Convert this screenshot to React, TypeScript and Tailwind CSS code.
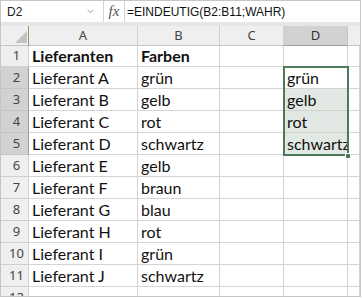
import React from 'react'

const cellFont = { fontFamily: 'Lato, "Noto Sans", sans-serif' }
const headFont = { fontFamily: '"Noto Sans", "Open Sans", sans-serif' }
const barFont = { fontFamily: '"Liberation Sans", Arial, sans-serif' }

const rows: [string, string][] = [
  ['Lieferant A', 'grün'],
  ['Lieferant B', 'gelb'],
  ['Lieferant C', 'rot'],
  ['Lieferant D', 'schwartz'],
  ['Lieferant E', 'gelb'],
  ['Lieferant F', 'braun'],
  ['Lieferant G', 'blau'],
  ['Lieferant H', 'rot'],
  ['Lieferant I', 'grün'],
  ['Lieferant J', 'schwartz'],
]

const unique = ['grün', 'gelb', 'rot', 'schwartz']

function RowHead({ n, sel, h }: { n: string; sel?: boolean; h: string }) {
  return (
    <div
      className={`${h} flex items-center justify-center border-b border-r pl-[4px] text-[13px] text-[#444] ${
        sel ? 'bg-[#d2d2d2] border-r-[#9e9e9e] border-b-[#c4c4c4]' : 'bg-[#efefef] border-[#d0d0d0]'
      }`}
      style={headFont}
    >
      {n}
    </div>
  )
}

function Cell({ text, h, bold, fill }: { text?: string; h: string; bold?: boolean; fill?: boolean }) {
  return (
    <div
      className={`${h} flex items-center overflow-visible whitespace-nowrap border-b border-r pl-[3px] text-[16px] text-[#111] ${
        fill ? 'bg-[#e2e8e3] border-[#cfd4cf]' : 'bg-white border-[#d4d4d4]'
      } ${bold ? 'font-bold' : ''}`}
      style={cellFont}
    >
      {text}
    </div>
  )
}

export default function App() {
  return (
    <div className="h-[298px] w-[362px] bg-white">
      <div className="flex h-[297px] w-[361px] flex-col overflow-hidden border border-[#c6c6c6]">
        {/* formula bar */}
        <div className="flex h-[21px] shrink-0 items-center bg-white" style={barFont}>
          <div className="flex h-full w-[99px] items-center justify-between pl-[6px] pr-[6px]">
            <span className="text-[12px] text-[#222]">D2</span>
            <svg width="7" height="5" viewBox="0 0 7 5">
              <path d="M0.5 0.8 L3.5 3.8 L6.5 0.8" fill="none" stroke="#9a9a9a" strokeWidth="1" />
            </svg>
          </div>
          <div className="h-full w-[3px]" />
          <div className="flex h-full w-[22px] items-center justify-center border-x border-[#d4d4d4]">
            <span className="text-[15px] italic text-[#555]" style={{ fontFamily: '"Liberation Serif", serif' }}>
              fx
            </span>
          </div>
          <div className="pl-[2px] text-[12px] text-[#111]">=EINDEUTIG(B2:B11;WAHR)</div>
        </div>
        <div className="h-[4px] shrink-0 bg-[#e6e6e6]" />

        {/* grid */}
        <div className="relative grid grid-cols-[28px_109px_82px_64px_64px_12px]">
          {/* column headers */}
          <div className="flex h-[20px] items-end justify-end border-b border-r border-b-[#c4c4c4] border-r-[#8c9a6c] bg-[#efefef] pb-[2px] pr-[1px]">
            <svg width="12" height="12" viewBox="0 0 12 12">
              <polygon points="12,0 12,12 0,12" fill="#c3c3c3" />
            </svg>
          </div>
          {['A', 'B', 'C'].map((c) => (
            <div
              key={c}
              className="flex h-[20px] items-center justify-center border-b border-r border-b-[#c4c4c4] border-r-[#d0d0d0] bg-[#efefef] text-[13px] text-[#444]"
              style={headFont}
            >
              {c}
            </div>
          ))}
          <div
            className="flex h-[20px] items-center justify-center border-b border-r border-b-[#9e9e9e] border-r-[#c4c4c4] bg-[#d2d2d2] text-[13px] text-[#333]"
            style={headFont}
          >
            D
          </div>
          <div className="h-[20px] border-b border-[#c4c4c4] bg-[#efefef]" />

          {/* row 1 */}
          <RowHead n="1" h="h-[21px]" />
          <Cell text="Lieferanten" h="h-[21px]" bold />
          <Cell text="Farben" h="h-[21px]" bold />
          <Cell h="h-[21px]" />
          <Cell h="h-[21px]" />
          <Cell h="h-[21px]" />

          {rows.map(([a, b], i) => {
            const n = i + 2
            const sel = n >= 2 && n <= 5
            return (
              <React.Fragment key={n}>
                <RowHead n={String(n)} sel={sel} h="h-[22px]" />
                <Cell text={a} h="h-[22px]" />
                <Cell text={b} h="h-[22px]" />
                <Cell h="h-[22px]" />
                <Cell text={sel ? unique[i] : undefined} h="h-[22px]" fill={n >= 3 && n <= 5} />
                <Cell h="h-[22px]" />
              </React.Fragment>
            )
          })}

          {/* row 12 (cut off) */}
          <RowHead n="12" h="h-[22px]" />
          <Cell h="h-[22px]" />
          <Cell h="h-[22px]" />
          <Cell h="h-[22px]" />
          <Cell h="h-[22px]" />
          <Cell h="h-[22px]" />

          {/* selection D2:D5 */}
          <div className="pointer-events-none absolute left-[282px] top-[40px] h-[90px] w-[66px] border-2 border-[#4a7a5a]" />
          <div className="absolute left-[344px] top-[127px] h-[6px] w-[6px] border border-white bg-[#4a7a5a]" />
        </div>
      </div>
    </div>
  )
}
